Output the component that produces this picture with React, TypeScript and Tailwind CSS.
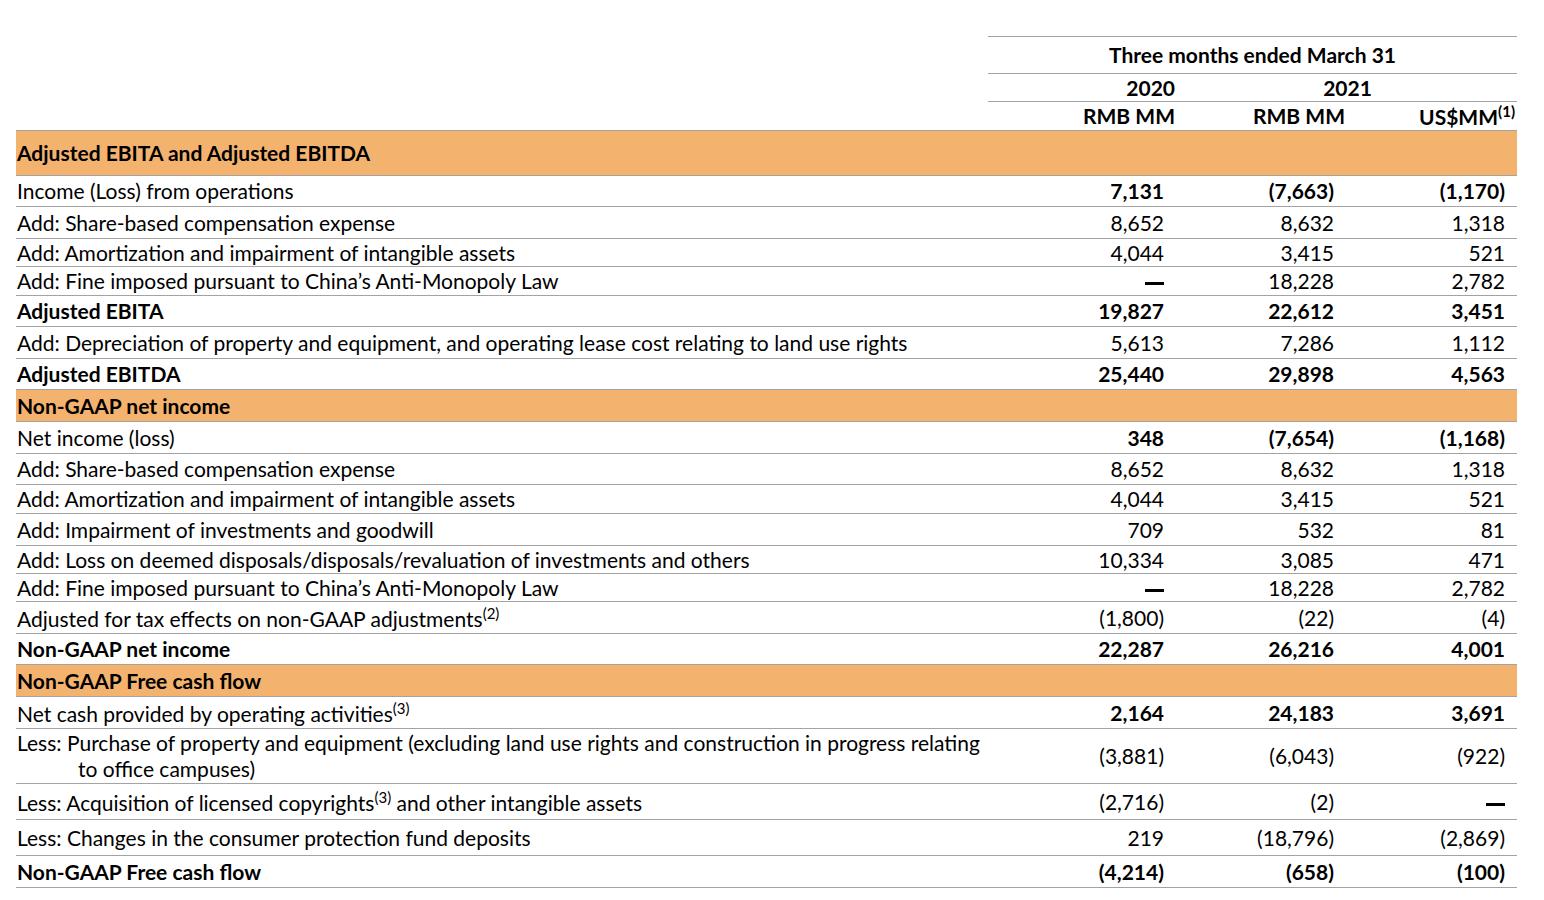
import React from 'react';

type Row = {
  label: React.ReactNode;
  v: [string, string, string];
  h: number;
  boldLabel?: boolean;
  boldVals?: boolean;
};

type Section = { title: string; h: number; rows: Row[] };

const Sup = ({ n }: { n: number }) => (
  <span className="text-[15px] align-super leading-none">({n})</span>
);

const Dash = () => <span className="inline-block w-[19px] h-[3px] bg-black align-middle" />;

const sections: Section[] = [
  {
    title: 'Adjusted EBITA and Adjusted EBITDA',
    h: 45,
    rows: [
      { label: 'Income (Loss) from operations', v: ['7,131', '(7,663)', '(1,170)'], h: 31, boldVals: true },
      { label: 'Add: Share-based compensation expense', v: ['8,652', '8,632', '1,318'], h: 32 },
      { label: 'Add: Amortization and impairment of intangible assets', v: ['4,044', '3,415', '521'], h: 28 },
      { label: 'Add: Fine imposed pursuant to China’s Anti-Monopoly Law', v: ['—', '18,228', '2,782'], h: 29 },
      { label: 'Adjusted EBITA', v: ['19,827', '22,612', '3,451'], h: 31, boldLabel: true, boldVals: true },
      {
        label: 'Add: Depreciation of property and equipment, and operating lease cost relating to land use rights',
        v: ['5,613', '7,286', '1,112'],
        h: 32,
      },
      { label: 'Adjusted EBITDA', v: ['25,440', '29,898', '4,563'], h: 31, boldLabel: true, boldVals: true },
    ],
  },
  {
    title: 'Non-GAAP net income',
    h: 32,
    rows: [
      { label: 'Net income (loss)', v: ['348', '(7,654)', '(1,168)'], h: 32, boldVals: true },
      { label: 'Add: Share-based compensation expense', v: ['8,652', '8,632', '1,318'], h: 31 },
      { label: 'Add: Amortization and impairment of intangible assets', v: ['4,044', '3,415', '521'], h: 29 },
      { label: 'Add: Impairment of investments and goodwill', v: ['709', '532', '81'], h: 32 },
      {
        label: 'Add: Loss on deemed disposals/disposals/revaluation of investments and others',
        v: ['10,334', '3,085', '471'],
        h: 28,
      },
      { label: 'Add: Fine imposed pursuant to China’s Anti-Monopoly Law', v: ['—', '18,228', '2,782'], h: 28 },
      {
        label: (
          <>
            Adjusted for tax effects on non-GAAP adjustments<Sup n={2} />
          </>
        ),
        v: ['(1,800)', '(22)', '(4)'],
        h: 32,
      },
      { label: 'Non-GAAP net income', v: ['22,287', '26,216', '4,001'], h: 31, boldLabel: true, boldVals: true },
    ],
  },
  {
    title: 'Non-GAAP Free cash flow',
    h: 32,
    rows: [
      {
        label: (
          <>
            Net cash provided by operating activities<Sup n={3} />
          </>
        ),
        v: ['2,164', '24,183', '3,691'],
        h: 32,
        boldVals: true,
      },
      {
        label: (
          <span className="block pl-[61px] -indent-[61px] leading-[26px]">
            Less: Purchase of property and equipment (excluding land use rights and construction in progress relating
            <br />
            to office campuses)
          </span>
        ),
        v: ['(3,881)', '(6,043)', '(922)'],
        h: 55,
      },
      {
        label: (
          <>
            Less: Acquisition of licensed copyrights<Sup n={3} /> and other intangible assets
          </>
        ),
        v: ['(2,716)', '(2)', '—'],
        h: 36,
      },
      { label: 'Less: Changes in the consumer protection fund deposits', v: ['219', '(18,796)', '(2,869)'], h: 36 },
      { label: 'Non-GAAP Free cash flow', v: ['(4,214)', '(658)', '(100)'], h: 32, boldLabel: true, boldVals: true },
    ],
  },
];

const line = 'border-b-[1.5px] border-[#a3a3a3]';

export default function App() {
  return (
    <div className="min-h-screen bg-white pt-[36px] pl-[16px] text-black">
      <table
        className="border-collapse table-fixed text-[21px] leading-[22px] font-['Lato',sans-serif]"
        style={{ width: 1501 }}
      >
        <colgroup>
          <col style={{ width: 972 }} />
          <col style={{ width: 190 }} />
          <col style={{ width: 170 }} />
          <col style={{ width: 169 }} />
        </colgroup>
        <thead className="font-bold">
          <tr className="h-[37px]">
            <td />
            <td colSpan={3} className={`text-center border-t-[1.5px] border-[#a3a3a3] ${line}`}>
              Three months ended March 31
            </td>
          </tr>
          <tr className="h-[28px]">
            <td />
            <td className={`text-right pr-[3px] ${line}`}>2020</td>
            <td colSpan={2} className={`text-center ${line}`}>2021</td>
          </tr>
          <tr className="h-[29px]">
            <td />
            <td className="text-right pr-[3px]">RMB MM</td>
            <td className="text-right pr-[3px]">RMB MM</td>
            <td className="text-right pr-[2px]">
              US$MM<Sup n={1} />
            </td>
          </tr>
        </thead>
        <tbody>
          {sections.map((s) => (
            <React.Fragment key={s.title}>
              <tr className={`bg-[#f4b26f] border-t-[1.5px] border-[#a3a3a3] ${line}`} style={{ height: s.h }}>
                <td colSpan={4} className="pl-[1px] font-bold">
                  {s.title}
                </td>
              </tr>
              {s.rows.map((r, i) => (
                <tr key={i} className={line} style={{ height: r.h }}>
                  <td className={`pl-[1px] ${r.boldLabel ? 'font-bold' : ''}`}>{r.label}</td>
                  {r.v.map((v, j) => (
                    <td
                      key={j}
                      className={`text-right ${j === 2 ? 'pr-[12px]' : 'pr-[14px]'} ${r.boldVals ? 'font-bold' : ''}`}
                    >
                      {v === '—' ? <Dash /> : v}
                    </td>
                  ))}
                </tr>
              ))}
            </React.Fragment>
          ))}
        </tbody>
      </table>
    </div>
  );
}
